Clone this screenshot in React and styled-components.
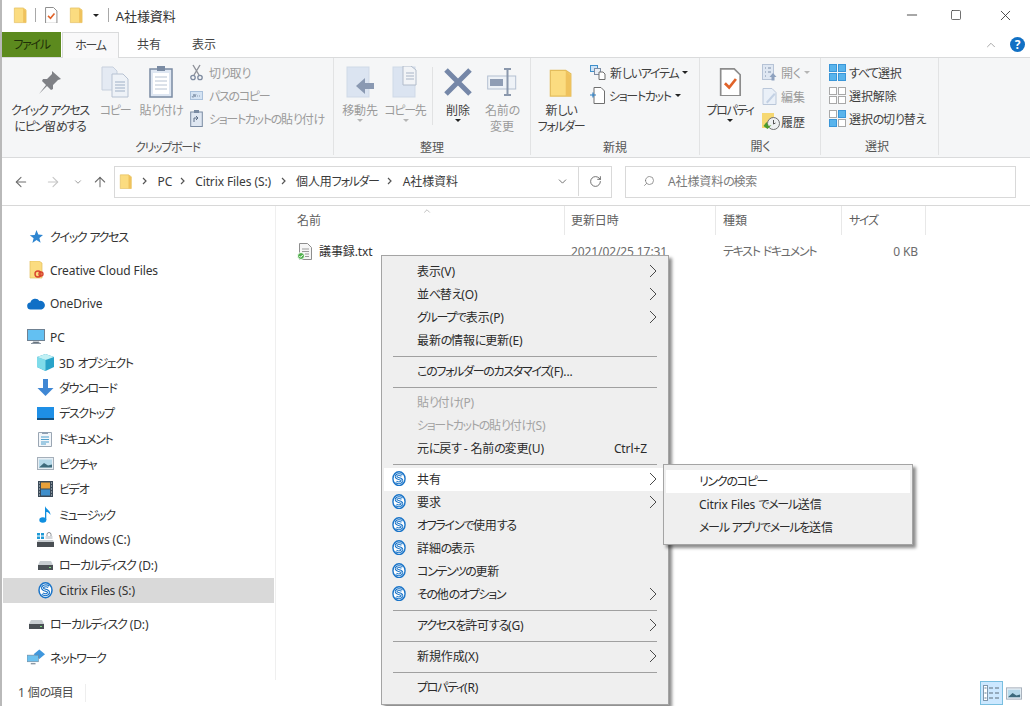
import React from 'react';
import styled, { createGlobalStyle } from 'styled-components';
import { ArrowLeft, ArrowRight, ArrowUp, ChevronDown, ChevronUp, RotateCw, Search, Minus, Square, X } from 'lucide-react';

const GlobalStyle = createGlobalStyle`
  html, body { margin: 0; padding: 0; background: #fff; }
  body {
    font-family: "Noto Sans", "Noto Sans CJK JP", sans-serif;
    font-size: 12px;
    font-feature-settings: "palt";
    letter-spacing: -0.1px;
    color: #2b2b2b;
  }
`;

const Page = styled.div`
  position: relative;
  width: 1030px;
  height: 706px;
  overflow: hidden;
  display: flex;
  flex-direction: column;
  box-sizing: border-box;
  border-left: 2px solid #b9b9b9;
  background: #fff;
`;

// the reference font has narrow kana, so kana runs get tighter spacing
const Narrow = styled.span`
  letter-spacing: -1.3px;
`;

const Jp = ({ children }) => (
  <span>
    {children.split(/([\u3040-\u30ff]+)/).map((part, i) =>
      i % 2 ? <Narrow key={i}>{part}</Narrow> : part
    )}
  </span>
);

const TitleBar = styled.div`
  height: 30px;
  padding: 0 0 2px 11px;
  display: flex;
  align-items: center;
  flex: none;
`;

const TitleSep = styled.span`
  width: 1px;
  height: 14px;
  background: #a8a8a8;
  margin: 0 ${(p) => p.$r || 8}px 0 ${(p) => p.$l || 8}px;
`;

const TitleGap = styled.span`
  width: ${(p) => p.$w}px;
`;

const TitleText = styled.span`
  font-size: 13px;
  color: #333;
`;

const WindowControls = styled.div`
  margin-left: auto;
  padding-right: 1px;
  display: flex;
  align-items: center;
  color: #333;
`;

const WindowButton = styled.span`
  width: ${(p) => p.$w}px;
  display: flex;
  justify-content: center;
`;

const TabRow = styled.div`
  height: 25px;
  display: flex;
  align-items: stretch;
  border-bottom: 1px solid #dadbdc;
  flex: none;
`;

const FileTab = styled.div`
  width: 59px;
  padding-bottom: 1px;
  box-sizing: border-box;
  background: #5c8a1e;
  color: #1f3008;
  display: flex;
  align-items: center;
  justify-content: center;
`;

const Tab = styled.div`
  width: ${(p) => p.$w}px;
  margin-left: ${(p) => p.$ml || 0}px;
  padding-bottom: 2px;
  display: flex;
  align-items: center;
  justify-content: center;
  color: #444;
  box-sizing: border-box;
  ${(p) => p.$active && `
    background: #f9f9fa;
    border: 1px solid #dadbdc;
    border-bottom: none;
    margin-bottom: -1px;
  `}
`;

const TabRight = styled.div`
  margin-left: auto;
  display: flex;
  align-items: center;
  gap: 12px;
  padding-right: 5px;
  color: #9c9c9c;
`;

const HelpBadge = styled.span`
  width: 15px;
  height: 15px;
  border-radius: 50%;
  background: #1170c4;
  color: #fff;
  font-size: 12px;
  font-weight: 700;
  display: flex;
  align-items: center;
  justify-content: center;
`;

const Ribbon = styled.div`
  height: 99px;
  background: #f5f6f7;
  border-bottom: 1px solid #dadbdc;
  display: flex;
  flex: none;
`;

const Group = styled.section`
  width: ${(p) => p.$w}px;
  box-sizing: border-box;
  padding-top: 3px;
  margin-bottom: 2px;
  display: flex;
  flex-direction: column;
  border-right: 1px solid #e2e3e4;
`;

const GroupBody = styled.div`
  flex: 1;
  display: flex;
  padding-left: ${(p) => p.$pad || 0}px;
`;

const GroupLabel = styled.div`
  height: 21px;
  line-height: 25px;
  text-align: center;
  color: #555;
  padding-right: ${(p) => p.$pr || 0}px;
`;

const LargeButton = styled.div`
  width: ${(p) => p.$w}px;
  display: flex;
  flex-direction: column;
  align-items: center;
  color: ${(p) => (p.$off ? '#9b9b9b' : '#3f3f3f')};
  line-height: 16px;
  text-align: center;
  white-space: nowrap;
`;

const LargeIcon = styled.div`
  height: 42px;
  display: flex;
  align-items: center;
  justify-content: center;
`;

const Caret = styled.span`
  width: 0;
  height: 0;
  border-left: 3px solid transparent;
  border-right: 3px solid transparent;
  border-top: 3px solid ${(p) => (p.$off ? '#b5b5b5' : '#222')};
  display: inline-block;
  flex: none;
`;

const SmallColumn = styled.div`
  margin-left: ${(p) => p.$ml || 0}px;
  display: flex;
  flex-direction: column;
`;

const SmallButton = styled.div`
  height: ${(p) => p.$h || 23}px;
  display: flex;
  align-items: center;
  gap: ${(p) => p.$gap || 4}px;
  white-space: nowrap;
  color: ${(p) => (p.$off ? '#9b9b9b' : '#3f3f3f')};
`;

const GroupRule = styled.span`
  width: 1px;
  height: 58px;
  margin: 6px 2px 0 4px;
  background: #e1e2e3;
`;

const AddressRow = styled.div`
  height: 48px;
  box-sizing: border-box;
  border-bottom: 1px solid #d8d8d8;
  display: flex;
  align-items: center;
  flex: none;
`;

const NavSlot = styled.span`
  width: ${(p) => p.$w}px;
  display: flex;
  justify-content: center;
  color: ${(p) => p.$c};
`;

const AddressBox = styled.div`
  width: 498px;
  height: 32px;
  margin-left: 4px;
  box-sizing: border-box;
  border: 1px solid #d9d9d9;
  display: flex;
  align-items: center;
  padding: 0 0 1px 4px;
  color: #3a3a3a;
`;

const Crumb = styled.span`
  margin-left: ${(p) => p.$ml}px;
  white-space: nowrap;
`;

const CrumbArrow = styled.svg`
  margin-left: ${(p) => p.$ml}px;
  flex: none;
`;

const AddressEnd = styled.div`
  margin-left: auto;
  display: flex;
  align-items: center;
  height: 100%;
  color: #555;
`;

const RefreshSlot = styled.span`
  width: 32px;
  height: 100%;
  margin-left: 9px;
  border-left: 1px solid #d9d9d9;
  display: flex;
  align-items: center;
  justify-content: center;
`;

const SearchBox = styled.div`
  width: 391px;
  height: 32px;
  margin-left: 13px;
  box-sizing: border-box;
  border: 1px solid #d9d9d9;
  display: flex;
  align-items: center;
  padding: 0 0 1px 17px;
  gap: 13px;
  color: #7a7a7a;
`;

const SearchGlass = styled(Search)`
  transform: scaleX(-1);
`;

const Main = styled.div`
  flex: 1;
  min-height: 0;
  display: flex;
`;

const NavPane = styled.nav`
  width: 274px;
  flex: none;
  box-sizing: border-box;
  padding-top: 18px;
  border-right: 1px solid #efefef;
`;

const NavRow = styled.div`
  height: 25.33px;
  margin-top: ${(p) => (p.$top ? 8.2 : 0)}px;
  margin-left: 1px;
  width: 271px;
  display: flex;
  align-items: center;
  gap: 5px;
  box-sizing: border-box;
  padding-left: ${(p) => (p.$child ? 33 : 24)}px;
  background: ${(p) => (p.$selected ? '#d9d9d9' : 'transparent')};
  color: #333;
  white-space: nowrap;
`;

const NavIcon = styled.span`
  width: 18px;
  display: flex;
  justify-content: center;
  flex: none;
`;

const FileArea = styled.div`
  flex: 1;
  min-width: 0;
  padding-left: 14px;
`;

const HeaderRow = styled.div`
  height: 29px;
  display: flex;
  align-items: stretch;
`;

const HeaderCell = styled.div`
  position: relative;
  width: ${(p) => p.$w}px;
  box-sizing: border-box;
  padding: 0 0 2px ${(p) => p.$pl || 7}px;
  display: flex;
  align-items: center;
  color: #5f5f5f;
  border-right: 1px solid #e8e8e8;
`;

const SortMark = styled.span`
  position: absolute;
  top: -3px;
  left: 50%;
  margin-left: -5px;
  color: #9a9a9a;
`;

const FileRow = styled.div`
  margin-top: 4px;
  height: 24px;
  display: flex;
  align-items: center;
`;

const FileCell = styled.div`
  width: ${(p) => p.$w}px;
  box-sizing: border-box;
  padding: 0 8px 0 ${(p) => p.$pl || 7}px;
  display: flex;
  align-items: center;
  gap: 7px;
  white-space: nowrap;
  color: ${(p) => p.$c || '#6b6b6b'};
  justify-content: ${(p) => (p.$right ? 'flex-end' : 'flex-start')};
`;

const StatusBar = styled.div`
  height: 26px;
  flex: none;
  display: flex;
  align-items: center;
  padding-left: 16px;
  color: #4d4d4d;
`;

const StatusText = styled.span`
  padding-right: 11px;
  border-right: 1px solid #eeeeee;
  line-height: 18px;
`;

const ViewButtons = styled.div`
  margin-left: auto;
  padding-right: 7px;
  display: flex;
  align-items: center;
  gap: 2px;
`;

const ViewButton = styled.span`
  width: ${(p) => (p.$on ? 23 : 18)}px;
  height: 24px;
  box-sizing: border-box;
  display: flex;
  align-items: center;
  justify-content: center;
  background: ${(p) => (p.$on ? '#cce8ff' : 'transparent')};
  border: 1px solid ${(p) => (p.$on ? '#79bfe0' : 'transparent')};
`;

const Menu = styled.div`
  position: absolute;
  left: ${(p) => p.$x}px;
  top: ${(p) => p.$y}px;
  width: ${(p) => p.$w}px;
  box-sizing: border-box;
  padding: ${(p) => p.$pad};
  background: #efefef;
  border: 1px solid #a4a4a4;
  box-shadow: 3px 3px 3px rgba(0, 0, 0, 0.45);
  color: #2b2b2b;
`;

const MenuRow = styled.div`
  height: 23px;
  box-sizing: border-box;
  display: flex;
  align-items: center;
  position: relative;
  padding: 0 0 1px 33px;
  background: ${(p) => (p.$hot ? '#fff' : 'transparent')};
  color: ${(p) => (p.$off ? '#a3a3a3' : 'inherit')};
  white-space: nowrap;
`;

const MenuIcon = styled.span`
  position: absolute;
  left: 8px;
  top: 3px;
  display: flex;
`;

const MenuHint = styled.span`
  margin-left: auto;
  margin-right: 19px;
`;

const MenuArrow = styled.svg`
  margin-left: auto;
  margin-right: 9px;
`;

const MenuSep = styled.div`
  height: 1px;
  margin: 4px 9px 3px 9px;
  background: #a0a0a0;
`;

/* icons */
const FolderIcon = ({ s = 16 }) => (
  <svg width={s * 0.9} height={s * 1.1} viewBox="0 0 14 18">
    <path d="M1 2h9l3 2v13H1z" fill="#fbdc80" stroke="#e3bd5c" strokeWidth=".7" />
    <path d="M10 2v15h3V5z" fill="#efc25d" />
  </svg>
);

const CheckDoc = ({ s = 14 }) => (
  <svg width={s} height={s * 1.2} viewBox="0 0 14 17">
    <path d="M1.500 .5h8l3.500 3.500v12.500H1.500z" fill="#fff" stroke="#8c8c8c" />
    <path d="M4 9l2.500 2.500L10.500 6.500" fill="none" stroke="#e0632a" strokeWidth="1.600" />
  </svg>
);

const PinIcon = () => (
  <svg width="24" height="24" viewBox="0 0 24 24">
    <path d="M14 1l9 8-3 1-5 5 0 4-2 1-4-4-8 8 7-9-4-4 1-2h4l5-5z" fill="#7f8186" />
  </svg>
);

const CopyIcon = () => (
  <svg width="28" height="32" viewBox="0 0 28 32">
    <path d="M1 1h11l4 4v19H1z" fill="#e4eaf3" stroke="#c7d0dd" />
    <path d="M11 8h11l5 5v18H11z" fill="#eef2f7" stroke="#b7c2d2" />
    <path d="M14 16h10M14 19h10M14 22h10M14 25h10" stroke="#9fb0c6" />
  </svg>
);

const PasteIcon = () => (
  <svg width="24" height="32" viewBox="0 0 24 32">
    <rect x="1" y="3" width="22" height="28" fill="#dfe7f2" stroke="#7a8ba3" strokeWidth="1.500" />
    <rect x="4" y="7" width="16" height="21" fill="#fff" />
    <path d="M6 11h12M6 15h12M6 19h12M6 23h12" stroke="#b8c4d4" />
    <rect x="8" y="0" width="8" height="5" fill="#7a8ba3" />
  </svg>
);

const ScissorsIcon = () => (
  <svg width="13" height="17" viewBox="0 0 13 17">
    <path d="M3 1l6 10M10 1L4 11" stroke="#8e9199" strokeWidth="1.400" fill="none" />
    <circle cx="3" cy="13.500" r="2.200" fill="none" stroke="#7d8aa0" strokeWidth="1.300" />
    <circle cx="10" cy="13.500" r="2.200" fill="none" stroke="#7d8aa0" strokeWidth="1.300" />
  </svg>
);

const PathIcon = () => (
  <svg width="13" height="9" viewBox="0 0 13 9">
    <rect x=".5" y=".5" width="12" height="8" fill="#d4e3f3" stroke="#a9c0da" />
    <path d="M2 5l1 1.500L4 3l1 3 1-3M7 5h1M9 5h1" stroke="#6d7f98" strokeWidth=".7" fill="none" />
  </svg>
);

const ShortcutPaste = () => (
  <svg width="13" height="17" viewBox="0 0 13 17">
    <rect x=".7" y="2" width="11.600" height="14.500" fill="#dfe7f2" stroke="#7a8ba3" />
    <rect x="4" y="0" width="5" height="3" fill="#7a8ba3" />
    <path d="M4 12V8h4M6 6l2 2-2 2" stroke="#5d6f88" fill="none" />
  </svg>
);

const MoveIcon = ({ copy }) => (
  <svg width="28" height="32" viewBox="0 0 28 32">
    <rect x="1" y="1" width="22" height="30" fill="#dbe4f1" stroke="#cfd9e7" />
    {copy ? (
      <g>
        <path d="M11 0h8l5 4v15H11z" fill="#f2f4f7" stroke="#b2bccb" />
        <path d="M14 7h8M14 10h8M14 13h8" stroke="#a8b4c6" />
      </g>
    ) : (
      <path d="M28 17H19v-5l-9 8 9 8v-5h9z" fill="#8a99b2" />
    )}
  </svg>
);

const DeleteIcon = () => (
  <svg width="28" height="28" viewBox="0 0 28 28">
    <path d="M2 2l24 24M26 2L2 26" stroke="#7587a8" strokeWidth="5" />
  </svg>
);

const RenameIcon = () => (
  <svg width="30" height="28" viewBox="0 0 30 28">
    <rect x=".7" y="8" width="28" height="13" fill="#eef2f7" stroke="#b4c0d1" />
    <rect x="3" y="11" width="13" height="7" fill="#8f9db4" />
    <path d="M17 1h7M17 27h7M20.500 1v26" stroke="#8a97ac" strokeWidth="2" />
  </svg>
);

const NewItemIcon = () => (
  <svg width="16" height="15" viewBox="0 0 16 15">
    <rect x=".5" y=".5" width="7" height="6" fill="#cfe4f7" stroke="#3f8fcb" />
    <rect x="4.500" y="3.500" width="6" height="6" fill="#e9eef5" stroke="#7f8da3" />
    <path d="M9 7h4l2 2v5.500H9z" fill="#fff" stroke="#6e6e6e" />
  </svg>
);

const NewShortcutIcon = () => (
  <svg width="15" height="17" viewBox="0 0 15 17">
    <path d="M4 .5h7l3.500 3.500v12.500H4z" fill="#fff" stroke="#6f6f6f" />
    <path d="M0 8h6M3 5.500v5" stroke="#2d7fc4" strokeWidth="1.200" />
  </svg>
);

const OpenIcon = () => (
  <svg width="15" height="17" viewBox="0 0 15 17">
    <rect x=".5" y=".5" width="11" height="15" fill="#dfe7f2" stroke="#b6c3d6" />
    <path d="M3 4h1M3 8h1M3 12h1M6 4h3M6 8h3" stroke="#7d8ea8" />
    <path d="M11 9l3.500 4H12.500v3.500h-3V13H7.500z" fill="#8fa2bf" />
  </svg>
);

const EditIcon = () => (
  <svg width="15" height="17" viewBox="0 0 15 17">
    <path d="M1 .5h9l4 4v12H1z" fill="#eaf0f8" stroke="#bac7d9" />
    <path d="M4 14l8-9 1.500 1.500-8 9z" fill="#c3d1e4" />
  </svg>
);

const HistoryIcon = () => (
  <svg width="18" height="17" viewBox="0 0 18 17">
    <rect x="0" y="0" width="12" height="15" fill="#f6d872" />
    <circle cx="11.500" cy="10.500" r="6" fill="#eef0f2" stroke="#6f6f6f" />
    <path d="M1.500 13l3-4 2 4 3-1-4 4z" fill="#4b9a2e" />
    <path d="M11.500 7v4l2-1" stroke="#555" fill="none" />
  </svg>
);

const GridIcon = ({ fill }) => (
  <svg width="17" height="17" viewBox="0 0 17 17">
    {[[0, 0], [9, 0], [0, 9], [9, 9]].map(([x, y], i) => (
      <rect
        key={i}
        x={x + 0.5}
        y={y + 0.5}
        width="7"
        height="7"
        fill={fill[i]}
        stroke={fill[i] === '#fff' ? '#a8a8a8' : '#3a96d8'}
      />
    ))}
  </svg>
);

const Blue = '#59b4ec';

const StarIcon = () => (
  <svg width="14" height="14" viewBox="0 0 14 14">
    <path d="M7.500 0l1.800 4.600 4.700.3-3.600 3 1.200 4.800-4.100-2.700L3.400 13l1.200-4.700-3.800-3 4.900-.4z" fill="#2f86d1" />
  </svg>
);

const CreativeFolder = () => (
  <svg width="15" height="18" viewBox="0 0 15 18">
    <path d="M1 0h9l3 2v15H1z" fill="#fbdc80" stroke="#e3bd5c" strokeWidth=".7" />
    <circle cx="9" cy="13" r="3" fill="none" stroke="#d8432e" strokeWidth="1.400" />
    <circle cx="12" cy="13" r="2" fill="none" stroke="#d8432e" strokeWidth="1.400" />
  </svg>
);

const CloudIcon = () => (
  <svg width="18" height="12" viewBox="0 0 18 12">
    <path d="M4 11.500a3.500 3.500 0 0 1-.6-7A5 5 0 0 1 12.500 3 4.300 4.300 0 0 1 14.500 11.500z" fill="#0f6fc6" />
  </svg>
);

const MonitorIcon = () => (
  <svg width="18" height="16" viewBox="0 0 18 16">
    <rect x=".5" y=".5" width="17" height="11" fill="#63c0f2" stroke="#6f8192" />
    <path d="M6 13h6v1H6zM4 14.500h10" stroke="#8c98a4" />
  </svg>
);

const CubeIcon = () => (
  <svg width="17" height="17" viewBox="0 0 17 17">
    <path d="M8.500 0L17 3v10l-8.500 4L0 13V3z" fill="#29a3c9" />
    <path d="M0 3l8.500 3v11L0 13z" fill="#7fdcea" />
    <path d="M8.500 0L17 3 8.500 6 0 3z" fill="#c1f0f4" />
  </svg>
);

const DownIcon = () => (
  <svg width="17" height="17" viewBox="0 0 17 17">
    <path d="M6 0h5v9h5.500L8.500 17 .5 9H6z" fill="#3f87d4" />
  </svg>
);

const DesktopIcon = () => (
  <svg width="17" height="13" viewBox="0 0 17 13">
    <rect width="17" height="13" fill="#1e8fe6" />
    <rect y="11" width="17" height="2" fill="#14507f" />
  </svg>
);

const DocIcon = () => (
  <svg width="14" height="16" viewBox="0 0 14 16">
    <path d="M.5 1.500h13v14H.5z" fill="#f2f6fa" stroke="#9aa6b3" />
    <path d="M4 1h6v2H4z" fill="#8fa0b2" />
    <path d="M3 6h8M3 8.500h8M3 11h8M3 13h5" stroke="#4f9fcc" />
  </svg>
);

const PictureIcon = () => (
  <svg width="17" height="13" viewBox="0 0 17 13">
    <rect x=".5" y=".5" width="16" height="12" fill="#e6eef4" stroke="#a5afba" />
    <rect x="2" y="2.500" width="13" height="8" fill="#b6d9ea" />
    <path d="M2 10.500L7 6l4 2.500 4-1v3z" fill="#3d6a7c" />
  </svg>
);

const FilmIcon = () => (
  <svg width="15" height="16" viewBox="0 0 15 16">
    <rect width="15" height="16" fill="#3b4a58" />
    <rect x="3" y="1.500" width="9" height="6" fill="#e8a13a" />
    <rect x="3" y="8.500" width="9" height="6" fill="#3f8fcb" />
    <path d="M1 2h1M1 5h1M1 8h1M1 11h1M1 14h1M13 2h1M13 5h1M13 8h1M13 11h1M13 14h1" stroke="#cdd6dd" />
  </svg>
);

const NoteIcon = () => (
  <svg width="12" height="17" viewBox="0 0 12 17">
    <ellipse cx="3.800" cy="14" rx="3.500" ry="2.800" fill="#0f8fe0" />
    <path d="M6 14V0c.5 3 5.500 4 5.500 9C10 6.500 8 6 7.300 6v8z" fill="#0f8fe0" />
  </svg>
);

const DiskIcon = () => (
  <svg width="15" height="9" viewBox="0 0 15 9">
    <path d="M2 0h11l2 4H0z" fill="#c8cdd1" />
    <rect y="4" width="15" height="5" fill="#4a4f54" />
    <rect x="11" y="6" width="2" height="1" fill="#7fe07f" />
  </svg>
);

const WindowsDisk = () => (
  <svg width="17" height="15" viewBox="0 0 17 15">
    <path d="M0 1h3v2.500H0zM4 1h3v2.500H4zM0 4.500h3V7H0zM4 4.500h3V7H4z" fill="#1f9ad6" />
    <path d="M10 4V2.500a2 2 0 0 1 4 0V4" fill="none" stroke="#8a8f94" />
    <rect x="8.500" y="4" width="7" height="3" fill="#d5d8db" />
    <path d="M1 8h15l1 2H0z" fill="#c8cdd1" />
    <rect y="10" width="17" height="5" fill="#4a4f54" />
  </svg>
);

const citrixS = 'M10.700 4.900C8.600 3.100 4.300 3.800 4.500 6.200c.2 2.500 6 1.600 6.100 4.100.1 2.400-4 3.100-6.300 1.300';

const CitrixIcon = ({ s = 15 }) => (
  <svg width={s} height={s * 1.1} viewBox="0 0 15 16.500">
    <ellipse cx="7.500" cy="8.250" rx="6.500" ry="7.400" fill="#fff" stroke="#1a74c8" strokeWidth="1.500" />
    <path d={citrixS} fill="none" stroke="#1a74c8" strokeWidth="3" />
    <path d={citrixS} fill="none" stroke="#fff" strokeWidth="1" />
  </svg>
);

const NetworkIcon = () => (
  <svg width="19" height="17" viewBox="0 0 19 17">
    <path d="M7 5l6-5 6 5-6 5z" fill="#3f97dd" />
    <rect x="0" y="6" width="12" height="7" fill="#6cc1ef" stroke="#6f8192" strokeWidth=".6" />
    <path d="M4 15h5" stroke="#8c98a4" strokeWidth="1.500" />
  </svg>
);

const TextFileIcon = () => (
  <svg width="15" height="17" viewBox="0 0 15 17">
    <path d="M2.500 .5h8l4 4v12h-12z" fill="#f6f6f6" stroke="#8e8e8e" />
    <path d="M5 6h7M5 8.500h7M8 11h4M8 13.500h4" stroke="#9a9a9a" />
    <circle cx="4" cy="13" r="3.500" fill="#4eb04b" stroke="#fff" />
    <path d="M2.300 13l1.300 1.300 2.200-2.400" stroke="#fff" fill="none" />
  </svg>
);

const DetailsViewIcon = () => (
  <svg width="17" height="16" viewBox="0 0 17 16">
    <rect x=".5" y=".5" width="4" height="15" fill="#fff" stroke="#7f97ad" />
    <path d="M1.500 3h2M1.500 8h2M1.500 13h2" stroke="#5f7f9b" />
    <path d="M6 3h4M12 3h4M6 8h4M12 8h4M6 13h4M12 13h4" stroke="#5d6c7b" />
  </svg>
);

const Chevron = () => (
  <MenuArrow width="8" height="14" viewBox="0 0 8 14">
    <path d="M1 1l6 6-6 6" fill="none" stroke="#4a4a4a" />
  </MenuArrow>
);

const CrumbSep = ({ ml }) => (
  <CrumbArrow $ml={ml} width="5" height="8" viewBox="0 0 5 8">
    <path d="M1 1l3 3-3 3" fill="none" stroke="#555" strokeWidth="1.200" />
  </CrumbArrow>
);

const navItems = [
  { label: 'クイック アクセス', icon: <StarIcon /> },
  { label: 'Creative Cloud Files', icon: <CreativeFolder />, top: true },
  { label: 'OneDrive', icon: <CloudIcon />, top: true },
  { label: 'PC', icon: <MonitorIcon />, top: true },
  { label: '3D オブジェクト', icon: <CubeIcon />, child: true },
  { label: 'ダウンロード', icon: <DownIcon />, child: true },
  { label: 'デスクトップ', icon: <DesktopIcon />, child: true },
  { label: 'ドキュメント', icon: <DocIcon />, child: true },
  { label: 'ピクチャ', icon: <PictureIcon />, child: true },
  { label: 'ビデオ', icon: <FilmIcon />, child: true },
  { label: 'ミュージック', icon: <NoteIcon />, child: true },
  { label: 'Windows (C:)', icon: <WindowsDisk />, child: true },
  { label: 'ローカルディスク (D:)', icon: <DiskIcon />, child: true },
  { label: 'Citrix Files (S:)', icon: <CitrixIcon />, child: true, selected: true },
  { label: 'ローカルディスク (D:)', icon: <DiskIcon />, top: true },
  { label: 'ネットワーク', icon: <NetworkIcon />, top: true },
];

const menuItems = [
  { label: '表示(V)', arrow: true },
  { label: '並べ替え(O)', arrow: true },
  { label: 'グループで表示(P)', arrow: true },
  { label: '最新の情報に更新(E)' },
  { sep: true },
  { label: 'このフォルダーのカスタマイズ(F)...' },
  { sep: true },
  { label: '貼り付け(P)', off: true },
  { label: 'ショートカットの貼り付け(S)', off: true },
  { label: '元に戻す - 名前の変更(U)', hint: 'Ctrl+Z' },
  { sep: true },
  { label: '共有', citrix: true, arrow: true, hot: true },
  { label: '要求', citrix: true, arrow: true },
  { label: 'オフラインで使用する', citrix: true },
  { label: '詳細の表示', citrix: true },
  { label: 'コンテンツの更新', citrix: true },
  { label: 'その他のオプション', citrix: true, arrow: true },
  { sep: true },
  { label: 'アクセスを許可する(G)', arrow: true },
  { sep: true },
  { label: '新規作成(X)', arrow: true },
  { sep: true },
  { label: 'プロパティ(R)' },
];

const columns = [275, 151, 126, 84];

export default function App() {
  return (
    <Page>
      <GlobalStyle />
      <TitleBar>
        <FolderIcon />
        <TitleSep />
        <CheckDoc />
        <TitleGap $w={11} />
        <FolderIcon />
        <TitleGap $w={9} />
        <Caret />
        <TitleSep $l={9} $r={7} />
        <TitleText>A社様資料</TitleText>
        <WindowControls>
          <WindowButton $w={38}><Minus size={16} strokeWidth={1.3} /></WindowButton>
          <WindowButton $w={50}><Square size={12} strokeWidth={1.4} /></WindowButton>
          <WindowButton $w={48}><X size={17} strokeWidth={1.2} /></WindowButton>
        </WindowControls>
      </TitleBar>

      <TabRow>
        <FileTab><Jp>ファイル</Jp></FileTab>
        <Tab $w={57} $ml={1} $active><Jp>ホーム</Jp></Tab>
        <Tab $w={60}>共有</Tab>
        <Tab $w={50}>表示</Tab>
        <TabRight>
          <ChevronUp size={14} strokeWidth={1.5} />
          <HelpBadge>?</HelpBadge>
        </TabRight>
      </TabRow>

      <Ribbon>
        <Group $w={332}>
          <GroupBody $pad={6}>
            <LargeButton $w={84}>
              <LargeIcon><PinIcon /></LargeIcon>
              <Jp>クイック アクセス</Jp>
              <Jp>にピン留めする</Jp>
            </LargeButton>
            <LargeButton $w={46} $off>
              <LargeIcon><CopyIcon /></LargeIcon>
              <Jp>コピー</Jp>
            </LargeButton>
            <LargeButton $w={46} $off>
              <LargeIcon><PasteIcon /></LargeIcon>
              <Jp>貼り付け</Jp>
            </LargeButton>
            <SmallColumn $ml={6}>
              <SmallButton $off $gap={6}><ScissorsIcon /><Jp>切り取り</Jp></SmallButton>
              <SmallButton $off $gap={6}><PathIcon /><Jp>パスのコピー</Jp></SmallButton>
              <SmallButton $off $gap={6}><ShortcutPaste /><Jp>ショートカットの貼り付け</Jp></SmallButton>
            </SmallColumn>
          </GroupBody>
          <GroupLabel><Jp>クリップボード</Jp></GroupLabel>
        </Group>

        <Group $w={197}>
          <GroupBody $pad={3}>
            <LargeButton $w={46} $off>
              <LargeIcon><MoveIcon /></LargeIcon>
              移動先
              <Caret $off />
            </LargeButton>
            <LargeButton $w={45} $off>
              <LargeIcon><MoveIcon copy /></LargeIcon>
              <Jp>コピー先</Jp>
              <Caret $off />
            </LargeButton>
            <GroupRule />
            <LargeButton $w={46}>
              <LargeIcon><DeleteIcon /></LargeIcon>
              削除
              <Caret />
            </LargeButton>
            <LargeButton $w={42} $off>
              <LargeIcon><RenameIcon /></LargeIcon>
              <Jp>名前の</Jp>
              <span>変更</span>
            </LargeButton>
          </GroupBody>
          <GroupLabel>整理</GroupLabel>
        </Group>

        <Group $w={169}>
          <GroupBody $pad={3}>
            <LargeButton $w={54}>
              <LargeIcon><FolderIcon s={28} /></LargeIcon>
              <Jp>新しい</Jp>
              <Jp>フォルダー</Jp>
            </LargeButton>
            <SmallColumn $ml={2}>
              <SmallButton><NewItemIcon /><Jp>新しいアイテム</Jp> <Caret /></SmallButton>
              <SmallButton><NewShortcutIcon /><Jp>ショートカット</Jp> <Caret /></SmallButton>
            </SmallColumn>
          </GroupBody>
          <GroupLabel>新規</GroupLabel>
        </Group>

        <Group $w={121}>
          <GroupBody $pad={3}>
            <LargeButton $w={54}>
              <LargeIcon><CheckDoc s={24} /></LargeIcon>
              <Jp>プロパティ</Jp>
              <Caret />
            </LargeButton>
            <SmallColumn $ml={5}>
              <SmallButton $off><OpenIcon /><Jp>開く</Jp> <Caret $off /></SmallButton>
              <SmallButton $off $h={25}><EditIcon />編集</SmallButton>
              <SmallButton $h={25} $gap={1}><HistoryIcon />履歴</SmallButton>
            </SmallColumn>
          </GroupBody>
          <GroupLabel><Jp>開く</Jp></GroupLabel>
        </Group>

        <Group $w={118}>
          <GroupBody $pad={8}>
            <SmallColumn>
              <SmallButton $gap={3}><GridIcon fill={[Blue, Blue, Blue, Blue]} /><Jp>すべて選択</Jp></SmallButton>
              <SmallButton $gap={3}><GridIcon fill={['#fff', '#fff', '#fff', '#fff']} />選択解除</SmallButton>
              <SmallButton $gap={3}><GridIcon fill={['#fff', Blue, Blue, '#fff']} /><Jp>選択の切り替え</Jp></SmallButton>
            </SmallColumn>
          </GroupBody>
          <GroupLabel $pr={5}>選択</GroupLabel>
        </Group>
      </Ribbon>

      <AddressRow>
        <NavSlot $w={38} $c="#6f6f6f"><ArrowLeft size={16} strokeWidth={1.6} /></NavSlot>
        <NavSlot $w={26} $c="#c6c6c6"><ArrowRight size={16} strokeWidth={1.6} /></NavSlot>
        <NavSlot $w={24} $c="#8a8a8a"><ChevronDown size={10} strokeWidth={2} /></NavSlot>
        <NavSlot $w={20} $c="#6f6f6f"><ArrowUp size={16} strokeWidth={1.6} /></NavSlot>
        <AddressBox>
          <FolderIcon s={15} />
          <CrumbSep ml={9} />
          <Crumb $ml={11}>PC</Crumb>
          <CrumbSep ml={8} />
          <Crumb $ml={10}>Citrix Files (S:)</Crumb>
          <CrumbSep ml={10} />
          <Crumb $ml={10}><Jp>個人用フォルダー</Jp></Crumb>
          <CrumbSep ml={8} />
          <Crumb $ml={11}>A社様資料</Crumb>
          <AddressEnd>
            <ChevronDown size={13} strokeWidth={1.5} />
            <RefreshSlot><RotateCw size={13} strokeWidth={1.5} /></RefreshSlot>
          </AddressEnd>
        </AddressBox>
        <SearchBox>
          <SearchGlass size={12} strokeWidth={1.5} />
          <Jp>A社様資料の検索</Jp>
        </SearchBox>
      </AddressRow>

      <Main>
        <NavPane>
          {navItems.map((item, i) => (
            <NavRow key={i} $top={item.top} $child={item.child} $selected={item.selected}>
              <NavIcon>{item.icon}</NavIcon>
              <Jp>{item.label}</Jp>
            </NavRow>
          ))}
        </NavPane>
        <FileArea>
          <HeaderRow>
            <HeaderCell $w={columns[0]}>
              名前
              <SortMark><ChevronUp size={10} strokeWidth={1.5} /></SortMark>
            </HeaderCell>
            <HeaderCell $w={columns[1]} $pl={6}>更新日時</HeaderCell>
            <HeaderCell $w={columns[2]}>種類</HeaderCell>
            <HeaderCell $w={columns[3]}><Jp>サイズ</Jp></HeaderCell>
          </HeaderRow>
          <FileRow>
            <FileCell $w={columns[0]} $c="#333"><TextFileIcon />議事録.txt</FileCell>
            <FileCell $w={columns[1]} $pl={6}>2021/02/25 17:31</FileCell>
            <FileCell $w={columns[2]}><Jp>テキスト ドキュメント</Jp></FileCell>
            <FileCell $w={columns[3]} $right>0 KB</FileCell>
          </FileRow>
        </FileArea>
      </Main>

      <StatusBar>
        <StatusText><Jp>1 個の項目</Jp></StatusText>
        <ViewButtons>
          <ViewButton $on><DetailsViewIcon /></ViewButton>
          <ViewButton><PictureIcon /></ViewButton>
        </ViewButtons>
      </StatusBar>

      <Menu $x={379} $y={255} $w={288} $pad="4px 2px 5px">
        {menuItems.map((item, i) =>
          item.sep ? (
            <MenuSep key={i} />
          ) : (
            <MenuRow key={i} $hot={item.hot} $off={item.off}>
              {item.citrix && <MenuIcon><CitrixIcon s={14} /></MenuIcon>}
              <Jp>{item.label}</Jp>
              {item.hint && <MenuHint>{item.hint}</MenuHint>}
              {item.arrow && <Chevron />}
            </MenuRow>
          )
        )}
      </Menu>

      <Menu $x={661} $y={464} $w={250} $pad="5px 2px">
        <MenuRow $hot><Jp>リンクのコピー</Jp></MenuRow>
        <MenuRow><Jp>Citrix Files でメール送信</Jp></MenuRow>
        <MenuRow><Jp>メール アプリでメールを送信</Jp></MenuRow>
      </Menu>
    </Page>
  );
}
